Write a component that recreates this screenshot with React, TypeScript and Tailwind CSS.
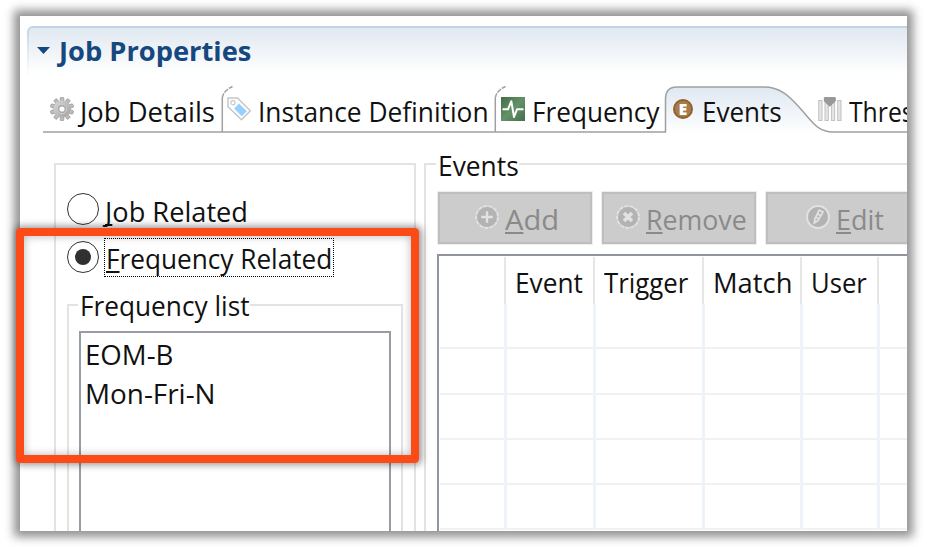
import { useLayoutEffect, useRef, useState, type ReactNode } from "react";

/* Label whose glyphs are condensed so that the text fills the given width. */
function Fit({ w, children, className = "" }: { w: number; children: ReactNode; className?: string }) {
  const ref = useRef<HTMLSpanElement>(null);
  const [scale, setScale] = useState(1);
  useLayoutEffect(() => {
    if (ref.current) setScale(w / ref.current.offsetWidth);
  }, [w]);
  return (
    <span className={`block shrink-0 h-9 pt-px text-[27px] leading-9 whitespace-nowrap ${className}`} style={{ width: w }}>
      <span ref={ref} className="inline-block origin-left" style={{ transform: `scaleX(${scale})` }}>
        {children}
      </span>
    </span>
  );
}

function Key({ children }: { children: ReactNode }) {
  return <span className="underline decoration-[1.5px] underline-offset-2 [text-decoration-skip-ink:none]">{children}</span>;
}

const teeth = [0, 36, 72, 108, 144, 180, 216, 252, 288, 324];

function Gear() {
  return (
    <svg className="size-6 shrink-0" viewBox="0 0 24 24">
      <defs>
        <linearGradient id="gear" x1="0" y1="0" x2="1" y2="1">
          <stop offset="0" stopColor="#dadada" />
          <stop offset="1" stopColor="#a0a0a0" />
        </linearGradient>
      </defs>
      {teeth.map((a) => (
        <rect key={a} x="10.2" y="0.3" width="3.6" height="5" rx="1" fill="#bdbdbd" stroke="#9a9a9a" strokeWidth=".8" transform={`rotate(${a} 12 12)`} />
      ))}
      <circle cx="12" cy="12" r="8.5" fill="url(#gear)" />
      <circle cx="12" cy="12" r="4.7" fill="#a9a9a9" stroke="#d0d0d0" strokeWidth="1" />
      <circle cx="12" cy="12" r="2.6" fill="#fff" />
    </svg>
  );
}

function Tag() {
  return (
    <svg className="size-6 shrink-0" viewBox="0 0 24 24">
      <path d="M1 1H10.5L23.3 13.8L14.5 22.8L1 9.8Z" fill="#fff" stroke="#c6c6c6" strokeWidth="1.5" />
      <circle cx="5.9" cy="5.7" r="2.1" fill="#fff" stroke="#c6c6c6" strokeWidth="1.2" />
      <path d="M12 6.6L19.9 14.2L14.8 19.2L7.1 11.6Z" fill="#95d0ff" />
    </svg>
  );
}

function Pulse() {
  return (
    <svg className="size-6 shrink-0" viewBox="0 0 24 24">
      <defs>
        <linearGradient id="pulse" x1="0" y1="0" x2="1" y2="1">
          <stop offset="0" stopColor="#416e47" />
          <stop offset=".5" stopColor="#64916a" />
          <stop offset="1" stopColor="#416e47" />
        </linearGradient>
      </defs>
      <rect width="24.5" height="24.5" fill="url(#pulse)" />
      <path d="M1.5 12.3H7L10.3 4.2L13 20L16 12.3H22.5" fill="none" stroke="#fff" strokeWidth="2" strokeLinejoin="round" />
    </svg>
  );
}

function EventBadge() {
  return (
    <span className="flex size-5 shrink-0 items-center justify-center rounded-full border-2 border-[#94602d] bg-[#a97c4c] text-[16px] leading-none font-extrabold text-white">
      E
    </span>
  );
}

function Threshold() {
  return (
    <svg className="size-6 shrink-0" viewBox="0 0 24 24">
      <g fill="#e4e4e4" stroke="#c2c2c2" strokeWidth="1">
        <rect x=".7" y="3.5" width="3.3" height="20" />
        <rect x="7" y="3.5" width="3.3" height="20" />
        <rect x="13.4" y="3.5" width="3.3" height="20" />
        <rect x="19.7" y="3.5" width="3.3" height="20" />
      </g>
      <path d="M6.3 .6H17.3V4L11.8 9.3L6.3 4Z" fill="#999" stroke="#838383" strokeWidth=".7" />
    </svg>
  );
}

function ActionIcon({ kind }: { kind: "add" | "remove" | "edit" }) {
  return (
    <svg className="size-6 shrink-0" viewBox="0 0 24 24">
      <circle cx="12" cy="12" r="11" fill="none" stroke="#e2e2e2" strokeWidth="1.8" strokeDasharray={kind === "edit" ? undefined : "4 1.3"} />
      <circle cx="12" cy="12" r="9.9" fill="#b3b3b3" />
      {kind === "add" && <path d="M12 6.2V17.8M6.2 12H17.8" stroke="#e2e2e2" strokeWidth="2.4" />}
      {kind === "remove" && <path d="M8 8L16 16M16 8L8 16" stroke="#e2e2e2" strokeWidth="3.6" />}
      {kind === "edit" && (
        <g fill="none" stroke="#e2e2e2" strokeWidth="1.7">
          <path d="M13.3 5.2L17 6.8L12.2 15.5L8.3 18L9 13.5Z" />
          <path d="M11.4 8.7L15 10.8M9.8 12L12.8 14" />
        </g>
      )}
    </svg>
  );
}

function Radio({ on = false }: { on?: boolean }) {
  return (
    <span className="flex size-8 shrink-0 items-center justify-center rounded-full border-[1.5px] border-[#333] bg-white">
      {on && <span className="size-4 rounded-full bg-[#303030]" />}
    </span>
  );
}

function Action({ kind, icon, text, w }: { kind: "add" | "remove" | "edit"; icon: string; text: string; w: number }) {
  return (
    <div className="flex h-[52px] w-[154px] shrink-0 border-2 border-[#bebebe] bg-[#ccc] pt-[7px] text-[#8a8a8a] outline outline-[#eee]">
      <div className={`flex ${icon}`}>
        <span className="mt-1 mr-1.5"><ActionIcon kind={kind} /></span>
        <Fit w={w}><Key>{text[0]}</Key>{text.slice(1)}</Fit>
      </div>
    </div>
  );
}

const columns = [
  { name: "", cell: "w-[67px]", w: 0 },
  { name: "Event", cell: "w-[89px]", w: 68 },
  { name: "Trigger", cell: "w-[109px]", w: 84 },
  { name: "Match", cell: "w-[98px]", w: 79 },
  { name: "User", cell: "w-[77px]", w: 56 },
];

function EventsTable() {
  return (
    <div className="mt-[10px] ml-[11px] h-[290px] w-[500px] border-t-2 border-l-2 border-[#8f959f] bg-white pt-px">
      <div className="flex h-[47px]">
        {columns.map((c, i) => (
          <div key={i} className={`shrink-0 border-r-2 border-[#e6e6e6] pt-[7px] pl-[9px] ${c.cell}`}>
            {c.name && <Fit w={c.w}>{c.name}</Fit>}
          </div>
        ))}
      </div>
      {[0, 1, 2, 3, 4].map((r) => (
        <div key={r} className="ml-px flex h-[45.25px] border-b-2 border-[#f1f1f1]">
          {columns.map((c, i) => (
            <div key={i} className={`-mb-0.5 shrink-0 border-r-[3px] border-[#eef3f9] ${c.cell}`} />
          ))}
        </div>
      ))}
    </div>
  );
}

function Header() {
  return (
    <div className="ml-[7px] flex h-14 w-[900px] shrink-0 rounded-tl-md bg-linear-to-b from-[#c1d2e6] to-white to-90% pt-0.5 pl-0.5">
      <div className="flex w-full rounded-tl-[4px] bg-linear-to-b from-[#e0e8f1] to-white to-85% pt-1 pl-2">
        <svg className="mt-[15px] h-[7px] w-[13px]" viewBox="0 0 13 7">
          <path d="M0 0H13L6.5 7Z" fill="#15487e" />
        </svg>
        <Fit w={192} className="ml-[9px] font-bold text-[#15487e]">Job Properties</Fit>
      </div>
    </div>
  );
}

function TabStrip() {
  return (
    <div className="relative h-[52px] w-[887px] shrink-0">
      <svg className="absolute inset-0" width="887" height="52" viewBox="20 82 887 52" fill="none">
        <defs>
          <linearGradient id="tab" x1="0" y1="0" x2="0" y2="1">
            <stop offset="0" stopColor="#dfe8f2" />
            <stop offset="1" stopColor="#fff" />
          </linearGradient>
        </defs>
        <path d="M665.5 134V99Q665.5 87 677 87H764C780 87 789 96 799 107C812 121 817 132 833 132V134Z" fill="url(#tab)" />
        <g stroke="#a0a0a0" strokeWidth="1.5">
          <path d="M43 132H665.5V99Q665.5 87 677 87H764C780 87 789 96 799 107C812 121 817 132 833 132H907" />
          <path d="M222.3 132V98M495.3 132V98" />
          <path d="M222.3 98Q223 91 232.5 86.5M495.3 98Q496 91 505.5 86.5" strokeDasharray="5 1" />
        </g>
      </svg>
      <div className="relative flex pt-[11px] pl-[23px]">
        <div className="flex w-[179px] shrink-0 gap-[6px] pl-[7px]"><span className="mt-1"><Gear /></span><Fit w={135}>Job Details</Fit></div>
        <div className="flex w-[273px] shrink-0 gap-[7px] pl-[5px]"><span className="mt-1"><Tag /></span><Fit w={231}>Instance Definition</Fit></div>
        <div className="flex w-[170px] shrink-0 gap-[7px] pl-[6px]"><span className="mt-1"><Pulse /></span><Fit w={127}>Frequency</Fit></div>
        <div className="flex w-[147px] shrink-0 gap-[9px] pl-2"><span className="mt-1.5"><EventBadge /></span><Fit w={80}>Events</Fit></div>
        <div className="flex shrink-0 gap-[7px] pl-[6px]"><span className="mt-1"><Threshold /></span><Fit w={65}>Thres</Fit></div>
      </div>
    </div>
  );
}

export default function App() {
  return (
    <div className="relative h-[547px] w-[927px] overflow-hidden bg-white pt-4 pl-5 font-['Open_Sans','Noto_Sans',sans-serif] text-[#111]">
      <div className="h-[515px] w-[887px] shadow-[0_0_9px_6px_rgba(0,0,0,0.43)]">
        <div className="flex h-full flex-col overflow-hidden bg-white pt-[10px]">
          <Header />
          <TabStrip />
          <div className="flex pt-[29px] pl-[34px]">
            <div className="h-[400px] w-[362px] shrink-0 border-2 border-[#e3e3e3] pt-[28px]">
              <div className="flex pl-[11px]">
                <Radio />
                <Fit w={143} className="ml-[6px]"><Key>J</Key>ob Related</Fit>
              </div>
              <div className="mt-[9px] flex pl-[11px]">
                <span className="mt-[3px]"><Radio on /></span>
                <div className="ml-[5px] h-[39px] w-[230px] border border-dotted border-black pt-px pl-px">
                  <Fit w={226}><Key>F</Key>requency Related</Fit>
                </div>
              </div>
              <div className="mt-[10px] ml-[11px]">
                <div className="flex h-[19px] items-start">
                  <span className="mt-[17px] h-[300px] w-[11px] border-t-2 border-l-2 border-[#e3e3e3]" />
                  <Fit w={170} className="ml-0.5">Frequency list</Fit>
                  <span className="mt-[17px] mr-[11px] h-[300px] grow border-t-2 border-r-2 border-[#e3e3e3]" />
                </div>
                <div className="mt-[25px] ml-[12px] h-[220px] w-[312px] border-2 border-[#979ca5] bg-white pt-[3px] pl-1">
                  <Fit w={88}>EOM-B</Fit>
                  <Fit w={131} className="mt-[3px]">Mon-Fri-N</Fit>
                </div>
              </div>
            </div>
            <div className="ml-2 h-[400px] w-[520px] shrink-0 border-l-2 border-[#e3e3e3]">
              <div className="flex h-[29px]">
                <span className="h-0 w-[10px] border-t-2 border-[#e3e3e3]" />
                <Fit w={81} className="-mt-4 ml-0.5">Events</Fit>
                <span className="h-0 grow border-t-2 border-[#e3e3e3]" />
              </div>
              <div className="ml-[12px] flex gap-[10px]">
                <Action kind="add" icon="pl-[35px]" text="Add" w={54} />
                <Action kind="remove" icon="pl-[12px]" text="Remove" w={101} />
                <Action kind="edit" icon="pl-[38px]" text="Edit" w={48} />
              </div>
              <EventsTable />
            </div>
          </div>
        </div>
      </div>
      <div className="absolute top-[228px] left-4 h-[235px] w-[403px] rounded border-8 border-[#fd4b17] shadow-[1px_0_7px_2px_rgba(0,0,0,0.4),inset_0_0_8px_rgba(0,0,0,0.3)]" />
    </div>
  );
}
